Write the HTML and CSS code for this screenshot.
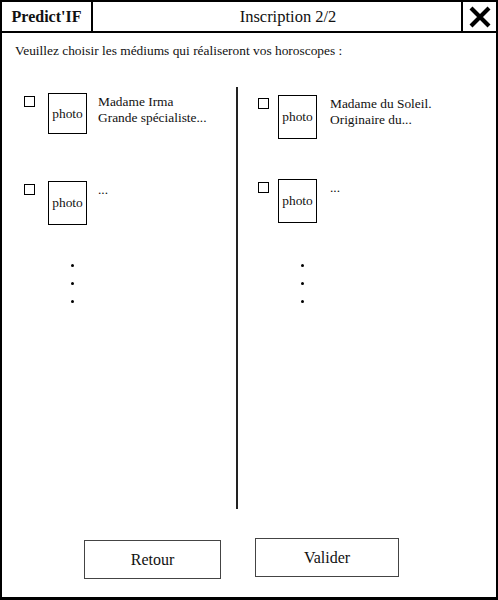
FILE: index.html
```html
<!DOCTYPE html>
<html lang="fr">
<head>
    <meta charset="UTF-8">
    <title>Predict'IF - Inscription 2/2</title>
    <link rel="stylesheet" href="styles.css">
</head>
<body>
    <div class="frame">
        <div class="header">
            <div class="logo">Predict'IF</div>
            <div class="title">Inscription 2/2</div>
            <div class="close">
                <svg width="24" height="22" viewBox="0 0 24 22">
                    <path d="M3 2 L21 20 M21 2 L3 20" stroke="#000" stroke-width="4.2" fill="none"/>
                </svg>
            </div>
        </div>

        <p class="intro">Veuillez choisir les médiums qui réaliseront vos horoscopes :</p>

        <div class="columns">
            <div class="column column-left">
                <div class="medium">
                    <span class="check"></span>
                    <div class="photo">photo</div>
                    <div class="desc">Madame Irma<br>Grande spécialiste...</div>
                </div>
                <div class="medium medium-more">
                    <span class="check"></span>
                    <div class="photo photo-tall">photo</div>
                    <div class="desc">...</div>
                </div>
                <div class="dots">
                    <span></span><span></span><span></span>
                </div>
            </div>
            <div class="divider"></div>
            <div class="column column-right">
                <div class="medium">
                    <span class="check"></span>
                    <div class="photo photo-tall">photo</div>
                    <div class="desc">Madame du Soleil.<br>Originaire du...</div>
                </div>
                <div class="medium medium-more">
                    <span class="check"></span>
                    <div class="photo photo-tall">photo</div>
                    <div class="desc">...</div>
                </div>
                <div class="dots">
                    <span></span><span></span><span></span>
                </div>
            </div>
        </div>

        <div class="actions">
            <button class="btn btn-back">Retour</button>
            <button class="btn btn-ok">Valider</button>
        </div>
    </div>
</body>
</html>
```

FILE: styles.css
```css
* {
    margin: 0;
    padding: 0;
    box-sizing: border-box;
}

html, body {
    background: #fff;
}

body {
    font-family: 'Liberation Serif', 'Times New Roman', serif;
    color: #111;
}

.frame {
    width: 498px;
    height: 600px;
    border: 2px solid #000;
    border-bottom-width: 3px;
    display: flex;
    flex-direction: column;
}

.header {
    display: flex;
    height: 31px;
    border-bottom: 2px solid #000;
}

.logo {
    width: 91px;
    border-right: 2px solid #000;
    font-weight: bold;
    font-size: 16px;
    display: flex;
    align-items: center;
    justify-content: center;
}

.title {
    flex: 1;
    font-size: 16.5px;
    padding-left: 22px;
    display: flex;
    align-items: center;
    justify-content: center;
}

.close {
    width: 35px;
    border-left: 2px solid #000;
    display: flex;
    align-items: center;
    justify-content: center;
}

.intro {
    font-size: 13.4px;
    line-height: 16px;
    margin: 10px 0 0 13px;
}

.columns {
    display: flex;
    margin-top: 28px;
    height: 422px;
}

.column {
    display: flex;
    flex-direction: column;
}

.column-left {
    width: 234px;
    padding-left: 22px;
}

.column-right {
    flex: 1;
    padding-left: 20px;
}

.divider {
    width: 2px;
    background: #222;
}

.medium {
    display: flex;
    align-items: flex-start;
    margin-top: 6px;
}

.medium-more {
    margin-top: 47px;
}

.column-right .medium {
    margin-top: 8px;
}

.column-right .medium-more {
    margin-top: 40px;
}

.check {
    width: 11px;
    height: 11px;
    border: 1px solid #000;
    margin-top: 3px;
}

.photo {
    width: 39px;
    height: 41px;
    border: 1px solid #000;
    margin-left: 13px;
    font-size: 13.4px;
    display: flex;
    align-items: center;
    justify-content: center;
}

.photo-tall {
    height: 44px;
}

.column-right .photo {
    margin-left: 9px;
}

.desc {
    font-size: 13.4px;
    line-height: 16px;
    margin-left: 11px;
    margin-top: 1px;
}

.column-right .desc {
    margin-left: 13px;
}

.dots {
    display: flex;
    flex-direction: column;
    gap: 15px;
    margin: 39px 0 0 47px;
}

.column-right .dots {
    margin: 41px 0 0 43px;
}

.dots span {
    width: 3px;
    height: 3px;
    border-radius: 50%;
    background: #000;
}

.actions {
    display: flex;
    align-items: flex-start;
    margin: 29px 0 0 82px;
    gap: 34px;
}

.btn {
    font-family: inherit;
    font-size: 16px;
    color: #111;
    background: #fff;
    border: 1px solid #444;
    height: 39px;
}

.btn-back {
    width: 137px;
    margin-top: 2px;
}

.btn-ok {
    width: 144px;
}
```
